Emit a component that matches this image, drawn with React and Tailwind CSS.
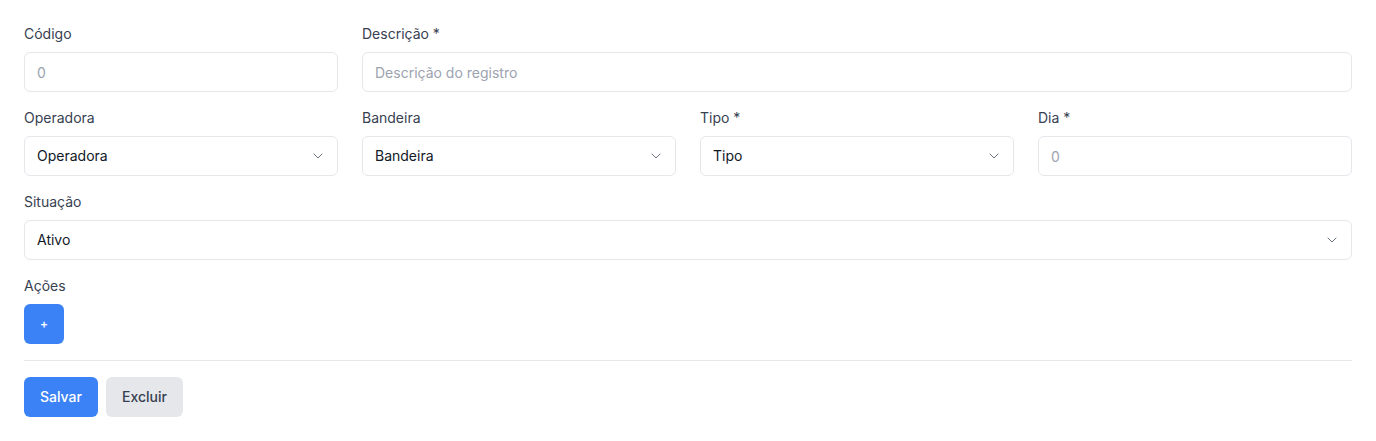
import { ChevronDown } from 'lucide-react'

function Field({ label, children, className = '' }) {
  return (
    <div className={`flex flex-col gap-2 ${className}`}>
      <label className="text-sm font-normal text-[#374151] leading-5">{label}</label>
      {children}
    </div>
  )
}

function TextInput({ placeholder }) {
  return (
    <input
      type="text"
      placeholder={placeholder}
      className="h-10 w-full rounded-md border border-[#e5e7eb] bg-white px-3 text-sm text-[#111827] placeholder:text-[#9ca3af] focus:outline-none"
    />
  )
}

function Select({ value }) {
  return (
    <div className="relative">
      <select
        defaultValue={value}
        className="h-10 w-full appearance-none rounded-md border border-[#e5e7eb] bg-white px-3 text-sm text-[#111827] focus:outline-none"
      >
        <option>{value}</option>
      </select>
      <ChevronDown className="pointer-events-none absolute right-3 top-1/2 h-4 w-4 -translate-y-1/2 text-[#6b7280]" strokeWidth={1.5} />
    </div>
  )
}

export default function App() {
  return (
    <div className="min-h-screen bg-white p-6 font-['Inter',sans-serif]">
      <div className="grid grid-cols-4 gap-x-6 gap-y-4">
        <Field label="Código">
          <TextInput placeholder="0" />
        </Field>
        <Field label="Descrição *" className="col-span-3">
          <TextInput placeholder="Descrição do registro" />
        </Field>

        <Field label="Operadora">
          <Select value="Operadora" />
        </Field>
        <Field label="Bandeira">
          <Select value="Bandeira" />
        </Field>
        <Field label="Tipo *">
          <Select value="Tipo" />
        </Field>
        <Field label="Dia *">
          <TextInput placeholder="0" />
        </Field>

        <Field label="Situação" className="col-span-4">
          <Select value="Ativo" />
        </Field>

        <Field label="Ações" className="col-span-4">
          <div>
            <button className="h-10 w-10 rounded-md bg-[#3b82f6] text-xs font-semibold text-white">+</button>
          </div>
        </Field>
      </div>

      <hr className="my-4 border-[#e5e7eb]" />

      <div className="flex gap-2">
        <button className="h-10 rounded-md bg-[#3b82f6] px-4 text-sm font-medium text-white">Salvar</button>
        <button className="h-10 rounded-md bg-[#e5e7eb] px-4 text-sm font-medium text-[#374151]">Excluir</button>
      </div>
    </div>
  )
}
